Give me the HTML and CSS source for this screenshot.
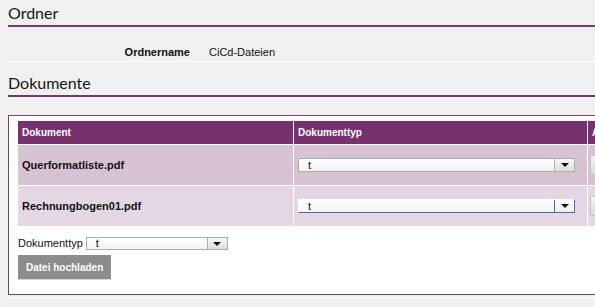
FILE: index.html
```html
<!DOCTYPE html>
<html lang="de">
<head>
<meta charset="utf-8">
<title>Ordner</title>
<link rel="stylesheet" href="styles.css">
</head>
<body>
<div class="page">
  <h2 class="section-title first">Ordner</h2>
  <div class="props">
    <div class="prop-label">Ordnername</div>
    <div class="prop-value">CiCd-Dateien</div>
  </div>
  <h2 class="section-title">Dokumente</h2>
  <div class="panel">
    <table class="doc-table">
      <thead>
        <tr>
          <th class="col-name">Dokument</th>
          <th class="col-type">Dokumenttyp</th>
          <th class="col-act">Aktion</th>
        </tr>
      </thead>
      <tbody>
        <tr class="row-odd">
          <td class="doc-name">Querformatliste.pdf</td>
          <td class="doc-type">
            <div class="select wide"><span class="select-text">t</span><span class="select-arrow"></span></div>
          </td>
          <td class="doc-act"><span class="act-btn"></span></td>
        </tr>
        <tr class="row-even">
          <td class="doc-name">Rechnungbogen01.pdf</td>
          <td class="doc-type">
            <div class="select wide focused"><span class="select-text">t</span><span class="select-arrow"></span></div>
          </td>
          <td class="doc-act"><span class="act-btn"></span></td>
        </tr>
      </tbody>
    </table>
    <div class="upload-row">
      <span class="upload-label">Dokumenttyp</span>
      <div class="select small"><span class="select-text">t</span><span class="select-arrow"></span></div>
    </div>
    <button class="upload-btn" type="button">Datei hochladen</button>
  </div>
  <div class="footer-line"></div>
</div>
</body>
</html>
```
FILE: styles.css
```css
html, body {
  margin: 0;
  padding: 0;
  overflow: hidden;
  background: #f0f0f0;
}

body {
  font-family: "Liberation Sans", Arial, sans-serif;
  font-size: 11px;
  color: #111;
}

.page {
  width: 760px;
  padding: 0 0 0 8px;
}

.section-title {
  margin: 11px 0 0;
  font-family: Lato, "Open Sans", sans-serif;
  font-weight: 400;
  font-size: 16px;
  line-height: 20px;
  color: #151515;
  padding: 0 0 2px;
  border-bottom: 2px solid #77356d;
}

.section-title.first {
  margin-top: 3px;
}

.props {
  display: grid;
  grid-template-columns: 182px 1fr;
  column-gap: 19px;
  padding: 18px 0 2px;
  line-height: 14px;
  border-bottom: 1px solid #ffffff;
}

.prop-label {
  text-align: right;
  font-weight: 700;
}

.panel {
  margin-top: 18px;
  background: #ffffff;
  border: 1px solid #7a3b70;
  border-right: none;
  padding: 4px 0 14px 9px;
}

.doc-table {
  border-collapse: separate;
  border-spacing: 1px;
  margin-left: -1px;
}

.doc-table th {
  background: #77316c;
  color: #ffffff;
  font-weight: 700;
  font-size: 10px;
  text-align: left;
  height: 23px;
  padding: 0 4px;
}

.doc-table td {
  height: 40px;
  padding: 0 4px;
  vertical-align: middle;
}

.col-name { width: 267px; }
.col-type { width: 285px; }
.col-act { width: 80px; }

.row-odd td { background: #d7c2d3; }
.row-even td { background: #e4d6e2; }

.doc-name {
  font-weight: 700;
}

.select {
  display: flex;
  align-items: stretch;
  box-sizing: border-box;
  background: linear-gradient(#ffffff, #f3f3f3);
  border: 1px solid #acacac;
}

.select.wide {
  width: 277px;
  height: 14px;
}

.select.small {
  width: 142px;
  height: 13px;
}

.select.focused {
  border-color: #ffffff #3d6db3 #3d6db3 #ffffff;
}

.select-text {
  flex: 1;
  padding-left: 9px;
  line-height: 12px;
  font-size: 11px;
  color: #111;
}

.select.small .select-text {
  line-height: 11px;
}

.select-arrow {
  width: 19px;
  border-left: 1px solid #acacac;
  background: linear-gradient(#f8f8f8, #dcdcdc);
  position: relative;
}

.select.focused .select-arrow {
  border-left-color: #3d6db3;
  background: linear-gradient(#ffffff, #eeeeee);
}

.select-arrow::after {
  content: "";
  position: absolute;
  left: 50%;
  top: 50%;
  margin-left: -4px;
  margin-top: -2px;
  border-left: 4px solid transparent;
  border-right: 4px solid transparent;
  border-top: 4px solid #111;
}

.doc-act {
  padding-left: 2px !important;
}

.act-btn {
  display: block;
  width: 40px;
  height: 18px;
  border: 1px solid #c4c4c4;
  background: linear-gradient(#f4f4f4, #dcdcdc);
}

.upload-row {
  display: flex;
  align-items: center;
  gap: 3px;
  margin-top: 10px;
  height: 13px;
}

.upload-label {
  line-height: 13px;
}

.upload-btn {
  display: block;
  margin-top: 5px;
  height: 25px;
  padding: 0 8px;
  background: #8c8c8c;
  color: #ffffff;
  font-family: "Liberation Sans", Arial, sans-serif;
  font-weight: 700;
  font-size: 10px;
  border: none;
  border-bottom: 1px solid #d6d6d6;
  border-radius: 0;
}

.footer-line {
  margin-top: 2px;
  border-top: 1px solid #ffffff;
}
```
